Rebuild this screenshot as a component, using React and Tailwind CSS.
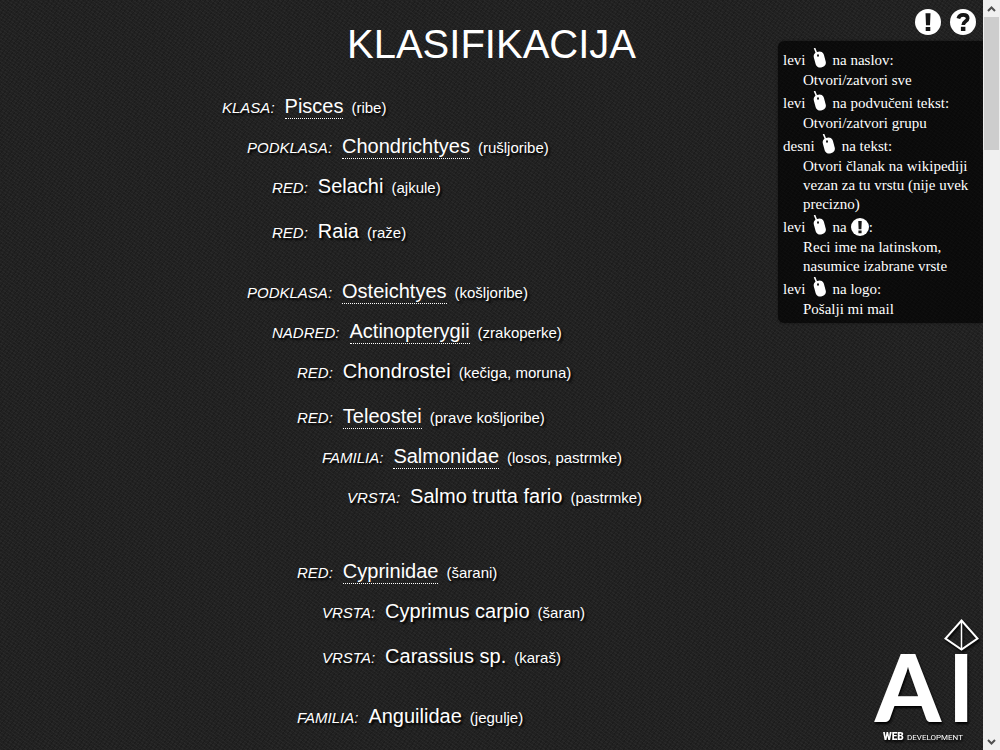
import React, { useState } from "react";

const tree = {
  rank: "KLASA", name: "Pisces", note: "ribe", children: [
    { rank: "PODKLASA", name: "Chondrichtyes", note: "rušljoribe", children: [
      { rank: "RED", name: "Selachi", note: "ajkule" },
      { rank: "RED", name: "Raia", note: "raže" },
    ] },
    { rank: "PODKLASA", name: "Osteichtyes", note: "košljoribe", children: [
      { rank: "NADRED", name: "Actinopterygii", note: "zrakoperke", children: [
        { rank: "RED", name: "Chondrostei", note: "kečiga, moruna" },
        { rank: "RED", name: "Teleostei", note: "prave košljoribe", children: [
          { rank: "FAMILIA", name: "Salmonidae", note: "losos, pastrmke", children: [
            { rank: "VRSTA", name: "Salmo trutta fario", note: "pastrmke" },
          ] },
        ] },
        { rank: "RED", name: "Cyprinidae", note: "šarani", children: [
          { rank: "VRSTA", name: "Cyprimus carpio", note: "šaran" },
          { rank: "VRSTA", name: "Carassius sp.", note: "karaš" },
        ] },
        { rank: "FAMILIA", name: "Anguilidae", note: "jegulje" },
      ] },
    ] },
  ],
};

function Taxon({ node }) {
  const [open, setOpen] = useState(true);
  return (
    <li className="pb-[15px]">
      <div className="flex h-[30px] items-baseline whitespace-nowrap text-[15px] leading-[30px]">
        <em className="mr-[10px]">{node.rank}:</em>
        {node.children ? (
          <button type="button" onClick={() => setOpen(!open)} className="cursor-pointer border-b border-dotted border-white text-xl leading-6">
            {node.name}
          </button>
        ) : (
          <span className="text-xl leading-6">{node.name}</span>
        )}
        <span className="ml-2">({node.note})</span>
      </div>
      {node.children && open && (
        <ul className="pt-[10px] pl-[25px]">
          {node.children.map((c) => <Taxon key={c.name} node={c} />)}
        </ul>
      )}
    </li>
  );
}

function Exclamation({ className }) {
  return (
    <svg viewBox="0 0 26 26" className={className} aria-hidden="true">
      <circle cx="13" cy="13" r="13" fill="#fff" />
      <path d="M10.500 4.300h5l-.5 12h-4zM10.700 18h4.600v4h-4.600z" fill="#161616" />
    </svg>
  );
}

function Question({ className }) {
  return (
    <svg viewBox="0 0 26 26" className={className} aria-hidden="true">
      <circle cx="13" cy="13" r="13" fill="#fff" />
      <path d="M8.300 9.400C9 6.900 10.700 5.900 13.200 5.900c2.700 0 4.500 1.300 4.500 3.400 0 3.100-4.500 3-4.500 6.700" fill="none" stroke="#161616" strokeWidth="3.700" />
      <path d="M10.900 17.800h4.500v4.200h-4.500z" fill="#161616" />
    </svg>
  );
}

function Mouse() {
  return (
    <svg viewBox="0 0 14 20" className="mr-[6px] ml-[7px] h-5 w-[14px] shrink-0" aria-hidden="true">
      <path d="M1.500 0 L3.500 5" stroke="#fff" strokeWidth="1.600" fill="none" />
      <rect x="1.700" y="3.500" width="10.400" height="16" rx="4.500" fill="#fff" transform="rotate(-15 7 12)" />
      <ellipse cx="5" cy="7.500" rx="1" ry="1.200" fill="#111" />
    </svg>
  );
}

function Help({ button, target, children }) {
  return (
    <>
      <dt className="flex h-6 items-center pb-[2px] leading-[19px]">
        <span className="pt-1">{button}</span>
        <Mouse />
        <span className="flex items-center pt-1">{target}</span>
      </dt>
      <dd className="pl-5 leading-[19px]">{children}</dd>
    </>
  );
}

function Logo() {
  return (
    <svg viewBox="0 0 106 126" className="h-[126px] w-[106px] drop-shadow-[1px_2px_1px_#000]" role="img" aria-label="AI Web Development">
      <path d="M87.500 2.500 103.500 20.500 87.500 31.500 71.500 20.500Z" fill="none" stroke="#fff" strokeWidth="2" />
      <path d="M87.500 2.500V31.500" stroke="#fff" strokeWidth="1.500" />
      <g fill="#fff">
        <text x="1" y="104" fontFamily="Lato, sans-serif" fontWeight="900" fontSize="94">A</text>
        <text x="87" y="104" textAnchor="middle" fontFamily="Inter, sans-serif" fontWeight="600" fontSize="93">I</text>
        <text x="9" y="122" fontFamily="Roboto, sans-serif" fontWeight="900" fontSize="10">WEB</text>
        <text x="33" y="122" fontFamily="Roboto, sans-serif" fontSize="8">DEVELOPMENT</text>
      </g>
    </svg>
  );
}

export default function App() {
  const [help, setHelp] = useState(true);
  return (
    <div className="flex h-screen overflow-hidden bg-[#212121] font-['Liberation_Sans',Arial,sans-serif] text-white">
      <div className="relative min-w-0 flex-1 overflow-hidden bg-[repeating-linear-gradient(35deg,#ffffff08_0px,#ffffff08_1px,transparent_1px,transparent_3px),repeating-linear-gradient(125deg,#00000026_0px,#00000026_1px,transparent_1px,transparent_4px)]">
        <main className="pt-5 [text-shadow:2px_2px_2px_#000]">
          <h1 className="text-center text-[40px] leading-[48px]">
            <button type="button" className="cursor-pointer">KLASIFIKACIJA</button>
          </h1>
          <ul className="mx-auto max-w-[539px] pt-[25px]">
            <Taxon node={tree} />
          </ul>
        </main>

        <aside className="absolute top-0 right-0 w-[205px] font-['Liberation_Serif','Times_New_Roman',serif] text-[15px]">
          <div className="flex justify-end gap-[9px] pt-[9px] pr-[7px] pb-[6px]">
            <button type="button" aria-label="Reci ime" className="cursor-pointer"><Exclamation className="size-[26px]" /></button>
            <button type="button" aria-label="Pomoć" onClick={() => setHelp(!help)} className="cursor-pointer"><Question className="size-[26px]" /></button>
          </div>
          {help && (
            <dl className="rounded-l-md bg-black/65 px-[5px] pt-[6px] pb-1 shadow-[0_0_3px_#0006]">
              <Help button="levi" target="na naslov:">Otvori/zatvori sve</Help>
              <Help button="levi" target="na podvučeni tekst:">Otvori/zatvori grupu</Help>
              <Help button="desni" target="na tekst:">Otvori članak na wikipediji vezan za tu vrstu (nije uvek precizno)</Help>
              <Help button="levi" target={<>na <Exclamation className="ml-1 size-[18px]" />:</>}>Reci ime na latinskom, nasumice izabrane vrste</Help>
              <Help button="levi" target="na logo:">Pošalji mi mail</Help>
            </dl>
          )}
        </aside>

        <a href="mailto:info@example.com" className="absolute right-[3px] bottom-[6px]"><Logo /></a>
      </div>

      <div aria-hidden="true" className="flex w-[17px] shrink-0 flex-col items-center bg-[#f0f0f0]">
        <svg viewBox="0 0 17 17" className="size-[17px] shrink-0"><path d="M5 11 8.500 7.500 12 11" fill="none" stroke="#505050" strokeWidth="2" /></svg>
        <div className="min-h-0 w-[15px] flex-1"><div className="h-[133px] bg-[#cdcdcd]" /></div>
        <svg viewBox="0 0 17 17" className="size-[17px] shrink-0"><path d="M5 7 8.500 10.500 12 7" fill="none" stroke="#505050" strokeWidth="2" /></svg>
      </div>
    </div>
  );
}
